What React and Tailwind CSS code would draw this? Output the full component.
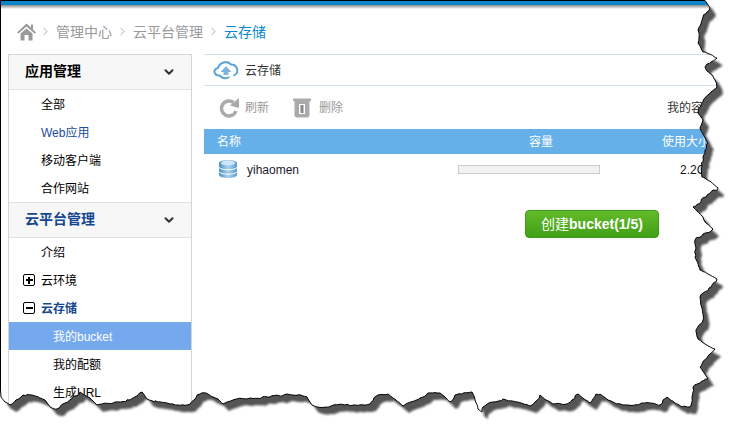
import React from 'react';
import { ChevronDown, ChevronRight } from 'lucide-react';

const tornPoints = [[705,0.5],[710,8],[707,12],[703,17],[701,24],[698,30],[699,38],[698,43],[703,52],[709,54],[717,58],[707,64],[705,67],[707,71],[713,76],[715,80],[717,87],[711,92],[705,98],[701,106],[698,113],[703,120],[700,128],[703,134],[708,143],[705,150],[703,157],[702,166],[702,177],[710,181],[718,188],[706,197],[693,207],[696,210],[703,217],[705,222],[713,229],[703,234],[695,240],[696,248],[695,257],[700,270],[708,274],[717,279],[709,288],[700,297],[702,308],[703,320],[696,330],[698,339],[705,344],[715,349],[707,358],[700,367],[708,379],[700,383],[693,387],[692,397],[690,407],[682,407],[675,403],[667,397],[663,400],[660,405],[650,403],[640,404],[628,405],[617,404],[608,400],[600,394],[596,394],[590,403],[584,399],[578,394],[572,400],[567,404],[553,404],[546,400],[540,395],[535,402],[530,406],[517,402],[503,399],[493,402],[483,407],[482,412],[478,409],[475,400],[472,392],[462,394],[455,395],[450,402],[445,397],[440,393],[428,393],[420,398],[403,406],[396,400],[388,394],[378,395],[370,404],[345,405],[317,407],[312,405],[307,397],[298,395],[287,394],[270,397],[250,398],[233,400],[223,404],[218,399],[213,397],[206,393],[200,394],[194,400],[187,405],[170,404],[158,402],[147,399],[142,392],[137,396],[130,400],[115,402],[97,405],[90,398],[80,392],[68,402],[57,409],[50,407],[45,400],[35,396],[23,395],[16,400],[10,405],[5,402],[1,397]];

// break the long segments up and shake them a little so the edge looks torn
const buildTornEdge = () => {
  let d = 'M0.5 0.5 L705 0.5';
  let n = 0;
  for (let i = 1; i < tornPoints.length; i++) {
    const [x0, y0] = tornPoints[i - 1];
    const [x1, y1] = tornPoints[i];
    const len = Math.hypot(x1 - x0, y1 - y0);
    const steps = Math.max(1, Math.round(len / 2.5));
    for (let s = 1; s <= steps; s++) {
      n++;
      const t = s / steps;
      const wob = s === steps ? 0 : Math.sin(n * 12.9898) * 43758.5453 % 1;
      d += ` L${(x0 + (x1 - x0) * t + wob * 0.9).toFixed(1)} ${(y0 + (y1 - y0) * t + wob).toFixed(1)}`;
    }
  }
  return `${d} L0.5 390 Z`;
};

const tornEdge = buildTornEdge();

const MenuItem = ({ children, icon, active, current, indent }) => (
  <div className={`relative flex h-7 items-center pt-px text-xs ${active ? 'bg-[#74a9ee] text-white' : 'text-black'} ${indent ? 'pl-[44px]' : 'pl-[32px]'}`}>
    {icon && (
      <span className="absolute left-[14px] top-[8px] flex h-3 w-3 items-center justify-center rounded-[2px] border-[1.5px] border-black">
        <span className="block h-[2px] w-[7px] bg-black" />
        {icon === 'plus' && <span className="absolute h-[7px] w-[2px] bg-black" />}
      </span>
    )}
    <span className={current === 'blue' ? 'text-[#254b9c]' : current === 'bold' ? 'font-bold text-[#14478f]' : ''}>{children}</span>
  </div>
);

const MenuHeader = ({ title, blue }) => (
  <div className={`flex h-[35px] items-center justify-between border-b border-[#e3e3e3] bg-[#f7f7f7] pl-4 pr-[15px] text-sm font-bold ${blue ? 'text-[#14478f]' : 'text-black'}`}>
    <span className="pb-[2px]">{title}</span>
    <ChevronDown size={14} strokeWidth={3.5} className="text-[#333]" />
  </div>
);

const Crumb = ({ children, last }) => (
  <>
    <ChevronRight size={13} strokeWidth={1.4} className="mx-[4px] text-[#999]" />
    <span className={last ? 'text-[#0a88cc]' : 'text-[#999]'}>{children}</span>
  </>
);

export default function App() {
  return (
    <div className="relative h-[434px] w-[740px] overflow-hidden bg-white text-xs" style={{ fontFamily: '"Liberation Sans", "Noto Sans CJK SC", sans-serif' }}>
      <div className="h-[5px] border-t border-black bg-[#0b87c9]" />
      <div className="h-[4px] bg-gradient-to-b from-[#8b8b8b] to-white" />

      <div className="flex h-[45px] items-center pl-[17px] text-sm">
        <svg width="19" height="18" viewBox="0 0 19 18" className="-mr-px">
          <path d="M9.5 0.5 L14 4.5 V1.5 H16 V6.5 L19 9.5 L17.5 10.5 L9.5 3.5 L1.5 10.5 L0 9.5 Z" fill="#999" />
          <path d="M3.5 10.5 L9.5 5.5 L15.5 10.5 V17.5 H11.5 V12 H7.5 V17.5 H3.5 Z" fill="#999" />
        </svg>
        <Crumb>管理中心</Crumb>
        <Crumb>云平台管理</Crumb>
        <Crumb last>云存储</Crumb>
      </div>

      <div className="flex">
        <div className="ml-2 h-[400px] w-[184px] shrink-0 border-x border-t border-[#d5d5d5]">
          <MenuHeader title="应用管理" />
          <MenuItem>全部</MenuItem>
          <MenuItem current="blue">Web应用</MenuItem>
          <MenuItem>移动客户端</MenuItem>
          <MenuItem>合作网站</MenuItem>
          <div className="border-t border-[#e3e3e3]">
            <MenuHeader title="云平台管理" blue />
          </div>
          <MenuItem>介绍</MenuItem>
          <MenuItem icon="plus">云环境</MenuItem>
          <MenuItem icon="minus" current="bold">云存储</MenuItem>
          <MenuItem indent active>我的bucket</MenuItem>
          <MenuItem indent>我的配额</MenuItem>
          <MenuItem indent>生成URL</MenuItem>
        </div>

        <div className="ml-3 w-[536px] shrink-0">
          <div className="flex h-[32px] items-center gap-[6px] border-y border-[#cfdfec] pl-[10px] text-[#333]">
            <svg width="26" height="20" viewBox="0 0 26 20" className="-ml-px">
              <path d="M7 15.5 C0.5 16 -0.5 9 5 8 C6.5 2.5 14 0 18 4.5 C24.5 4.5 27 13 20.5 15.5" fill="none" stroke="#5da5d8" strokeWidth="2" />
              <path d="M13 6 L18.5 12 H15.5 V15 H10.5 V12 H7.5 Z" fill="#7fb5dc" />
              <path d="M6.5 15.5 C10 19 14 18.5 16.5 17" fill="none" stroke="#5da5d8" strokeWidth="2" />
            </svg>
            <span className="pt-[2px]">云存储</span>
          </div>

          <div className="flex h-[43px] items-center pl-[14px] text-[#999]">
            <svg width="22" height="22" viewBox="0 0 22 22">
              <path d="M18 14 A7.5 7.5 0 1 1 15.5 5.5" fill="none" stroke="#aaa" strokeWidth="3.5" />
              <path d="M12 8.5 L21 1 V11 Z" fill="#aaa" />
            </svg>
            <span className="ml-[5px]">刷新</span>
            <svg width="18" height="21" viewBox="0 0 18 21" className="ml-[24px]">
              <path d="M0 1.5 H18 V4 H0 Z" fill="#aaa" />
              <path d="M1.5 4 H16.5 V19 L15 20.5 H3 L1.5 19 Z" fill="#aaa" />
              <rect x="6" y="7" width="6" height="10" fill="#fff" />
              <rect x="7.5" y="8" width="3" height="8" fill="#888" />
            </svg>
            <span className="ml-[8px]">删除</span>
            <span className="ml-[324px] text-[#333]">我的容量：</span>
          </div>

          <div className="flex h-[25px] items-center bg-[#66b0ea] pl-[13px] text-white">
            <span className="w-[312px]">名称</span>
            <span className="w-[133px]">容量</span>
            <span>使用大小</span>
          </div>

          <div className="flex h-[30px] items-center pl-[14px]">
            <svg width="20" height="20" viewBox="0 0 20 20" className="shrink-0">
              <defs>
                <linearGradient id="db" x1="0" y1="0" x2="1" y2="0">
                  <stop offset="0" stopColor="#4a8fc4" />
                  <stop offset="0.5" stopColor="#a9d1ee" />
                  <stop offset="1" stopColor="#5b9fd0" />
                </linearGradient>
              </defs>
              <path d="M1 4 C1 0 19 0 19 4 V16 C19 20 1 20 1 16 Z" fill="url(#db)" />
              <ellipse cx="10" cy="4" rx="7" ry="2.4" fill="#cfe5f5" />
              <path d="M1 8.5 C4 11.5 16 11.5 19 8.5 M1 13 C4 16 16 16 19 13" fill="none" stroke="#fff" strokeWidth="1" />
            </svg>
            <span className="ml-[9px] w-[211px] pt-[2px] text-[#1a1a2e]">yihaomen</span>
            <div className="h-[9px] w-[142px] border border-[#ccc] bg-[#f2f2f2]" />
            <span className="ml-[80px] pt-[2px] text-[#111]">2.2G</span>
          </div>

          <button className="ml-[321px] mt-[26px] flex h-[28px] w-[134px] items-center justify-center rounded border border-[#3f9a1c] bg-gradient-to-b from-[#62bb2a] to-[#41a015] text-sm font-bold text-white">
            <span className="font-normal">创建</span>bucket(1/5)
          </button>
        </div>
      </div>

      {/* torn paper edge that lies over the page */}
      <svg width="740" height="434" viewBox="0 0 740 434" className="absolute left-0 top-0">
        <defs>
          <clipPath id="outside">
            <path d={`M0 0 H740 V434 H0 Z ${tornEdge}`} clipRule="evenodd" />
          </clipPath>
          <filter id="soft" x="-5%" y="-5%" width="110%" height="110%">
            <feGaussianBlur stdDeviation="1.3" />
          </filter>
        </defs>
        <g clipPath="url(#outside)">
          <rect width="740" height="434" fill="#fff" />
          <path d={tornEdge} fill="#555" filter="url(#soft)" transform="translate(6 7)" />
        </g>
        <path d={tornEdge} fill="none" stroke="#000" strokeWidth="1" />
      </svg>
    </div>
  );
}
